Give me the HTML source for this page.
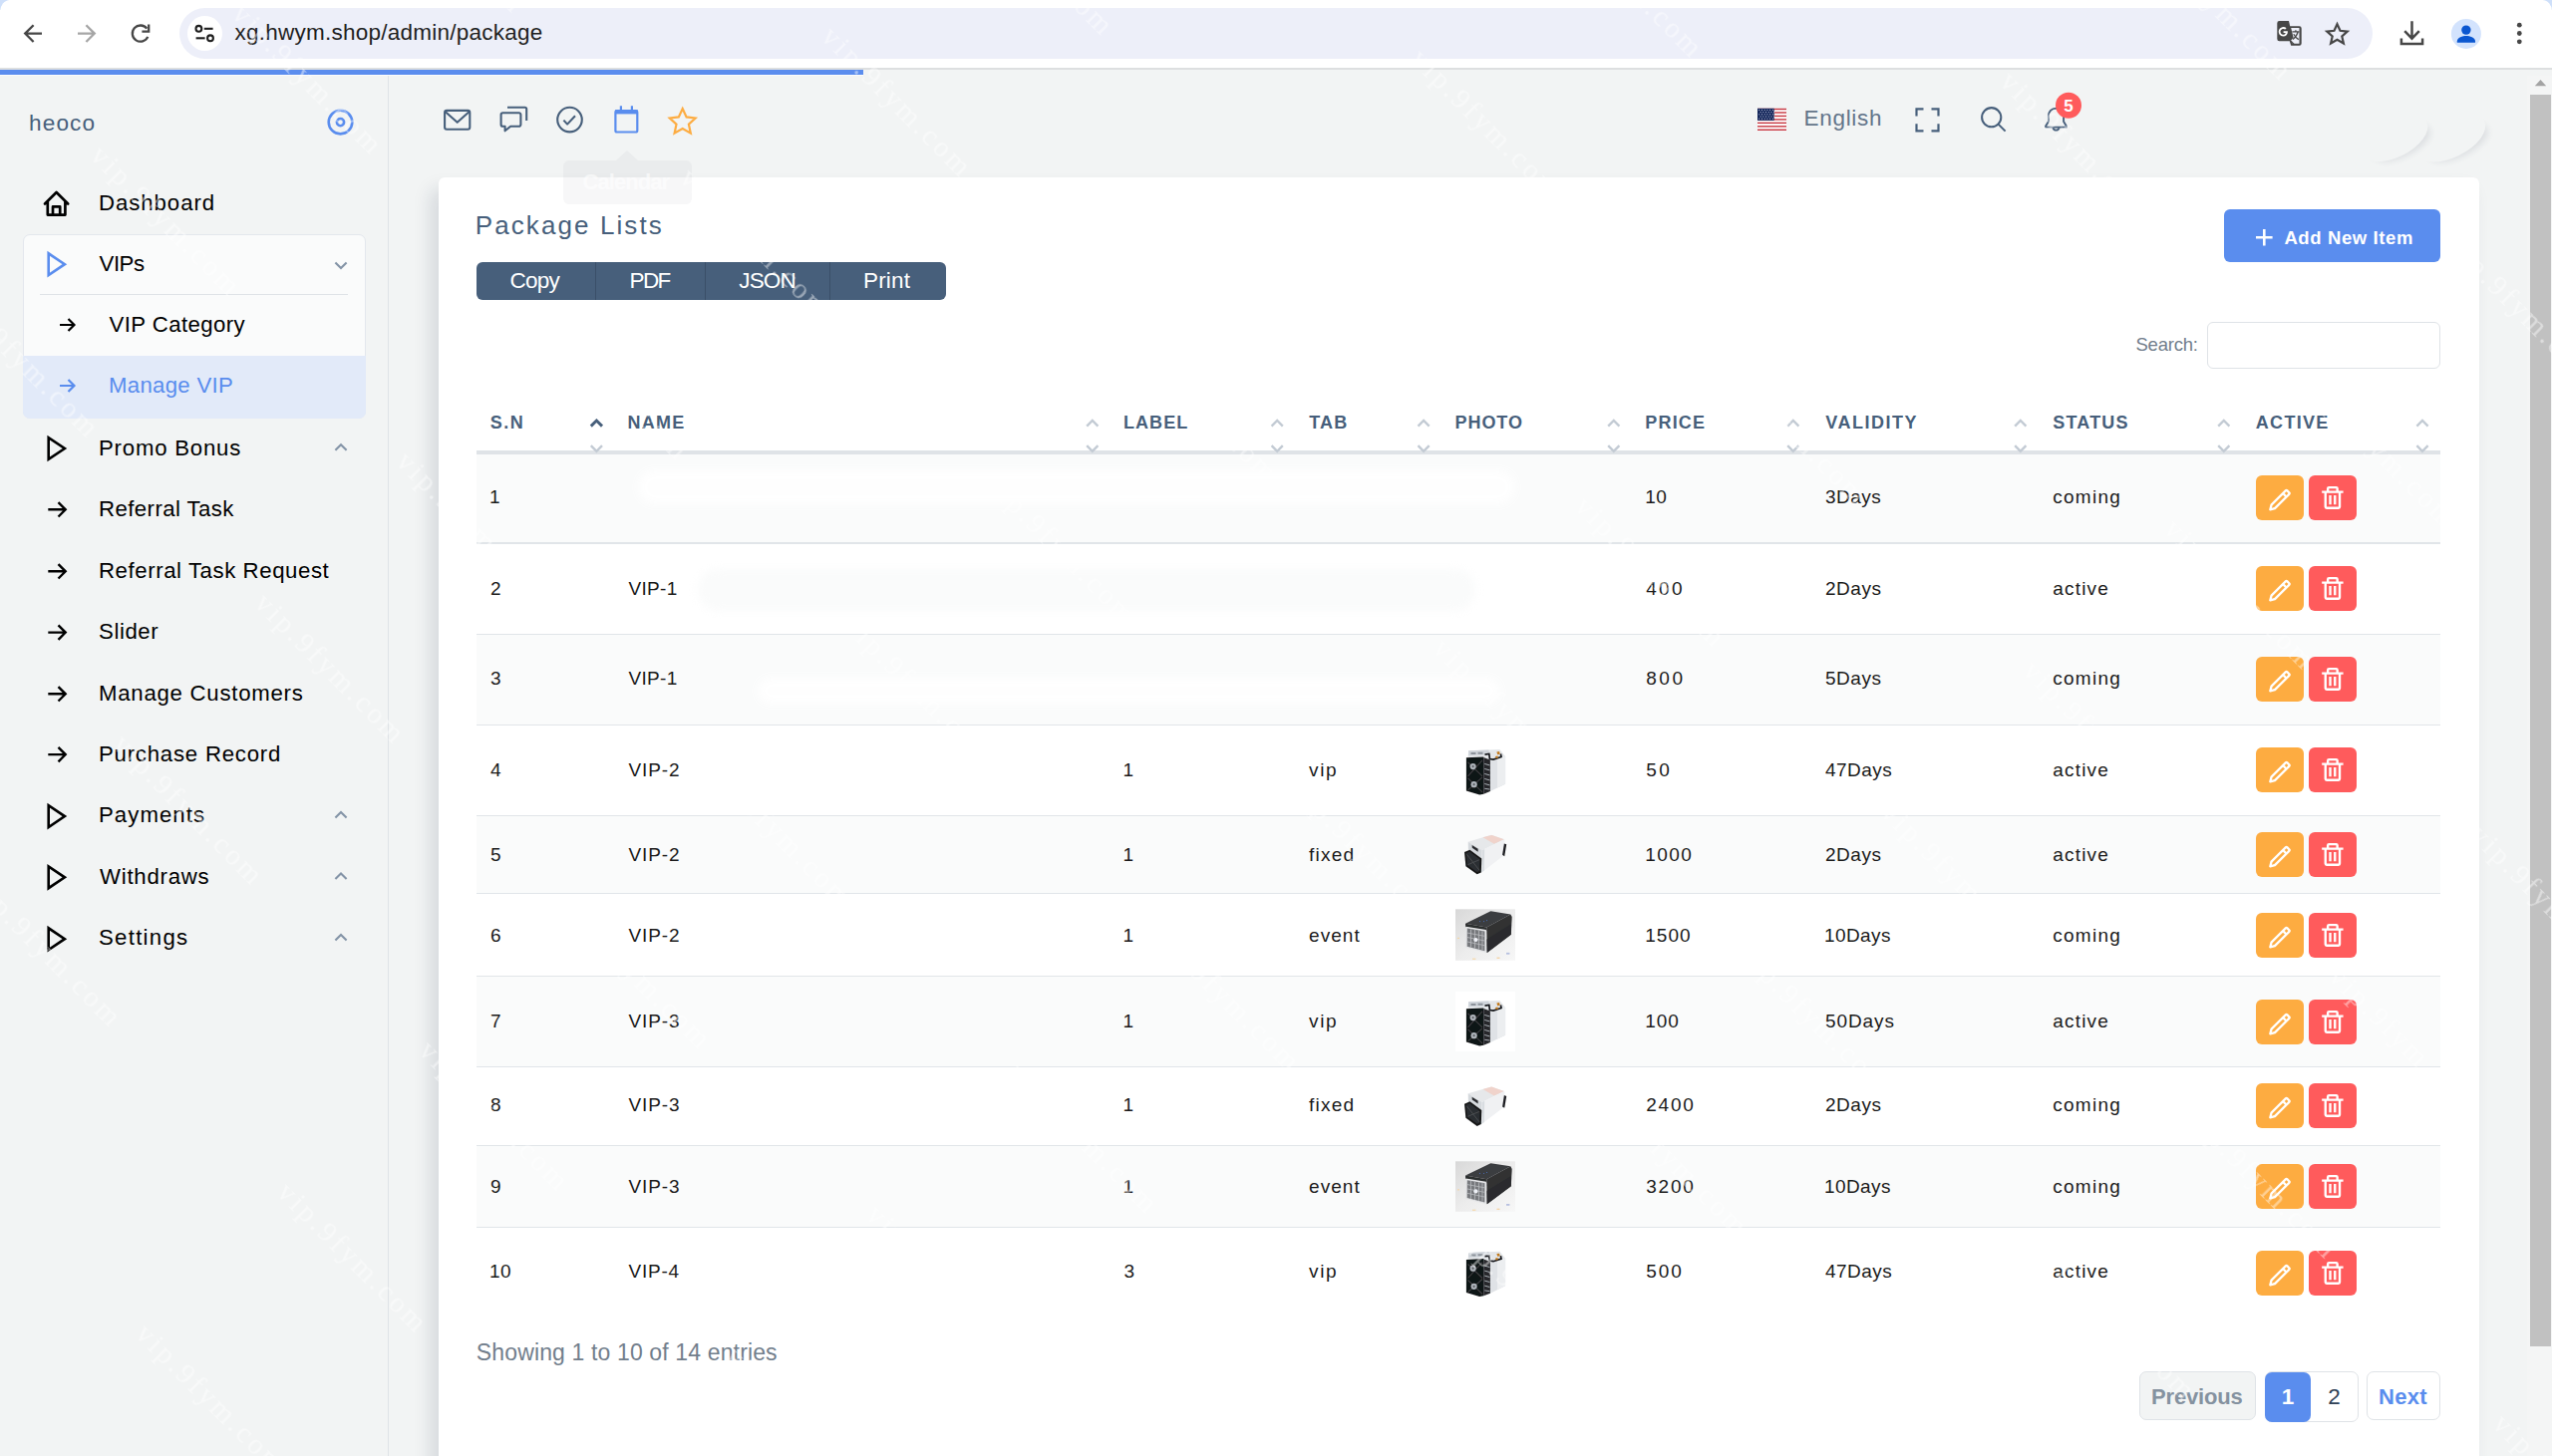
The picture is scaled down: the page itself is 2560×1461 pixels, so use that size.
<!DOCTYPE html>
<html><head><meta charset="utf-8"><title>Package Lists</title><style>html,body{margin:0;padding:0;background:#f2f4f4;}
body{width:2560px;height:1461px;overflow:hidden;position:relative;font-family:"Liberation Sans",sans-serif;}
#root{position:absolute;left:0;top:0;width:2560px;height:1461px;overflow:hidden;}
#root>div,#root>span,#root>svg{position:absolute;display:block;}
#root>span{white-space:nowrap;}
svg{overflow:visible;}</style></head><body><div id="root">
<div style="left:0px;top:0px;width:2560px;height:1461px;background:#f2f4f4;"></div>
<div style="left:0px;top:0px;width:2560px;height:69px;background:#ffffff;"></div>
<div style="left:0px;top:68.3px;width:2560px;height:1.7px;background:#dddfe0;"></div>
<div style="left:0;top:0;width:9px;height:10px;background:#cfe0fa;"></div><div style="left:0;top:0;width:30px;height:30px;border-radius:10px 0 0 0/12px 0 0 0;background:#fff;"></div>
<div style="left:2551px;top:0;width:9px;height:10px;background:#cfe0fa;"></div><div style="left:2530px;top:0;width:30px;height:30px;border-radius:0 10px 0 0/0 11px 0 0;background:#fff;"></div>
<div style="left:180px;top:8px;width:2200px;height:51px;background:#edeff9;border-radius:26px;"></div>
<div style="left:188px;top:16px;width:35px;height:35px;background:#ffffff;border-radius:50%;"></div>
<div style="left:0px;top:70px;width:865.5px;height:4.9px;background:#5b8dee;"></div>
<div style="left:0px;top:74.9px;width:865.5px;height:1px;background:rgba(255,255,255,.7);"></div>
<svg style="left:0px;top:0px;" width="2560" height="68" viewBox="0 0 2560 68">
<g fill="none" stroke="#474747" stroke-width="2.3" stroke-linecap="butt" stroke-linejoin="miter">
<path d="M42 33.6H26.5M33.6 25.2L25.2 33.6L33.6 42"/>
<path d="M78 33.6H93.5M86.4 25.2L94.8 33.6L86.4 42" stroke="#a6a6a6"/>
<path d="M147.3 28.6A8.1 8.1 0 1 0 148.3 36.9" /><path d="M149.2 24.4V31.7H142.4" />
</g>
<g fill="none" stroke="#1f1f1f" stroke-width="2.1">
<circle cx="199.4" cy="28.8" r="2.9"/><path d="M204.8 28.8H213.6"/>
<circle cx="211" cy="38.3" r="2.9"/><path d="M196.6 38.3H205.6"/>
</g>
<!-- translate -->
<path d="M2286.5 21h9.5l1.2 5.2h9.3a2.2 2.2 0 0 1 2.2 2.2v15.2a2.2 2.2 0 0 1-2.2 2.2h-8.3l-1.4-4.6h-10.3a2.2 2.2 0 0 1-2.2-2.2V23.2a2.2 2.2 0 0 1 2.2-2.2z" fill="#474747"/>
<path d="M2298.2 28h8.3v15.8h-7.2l-1.1-3.4 2.4-2.6z" fill="#edeff9"/>
<path d="M2299.4 31.8h7M2302.9 30.3v1.5M2305.2 31.8c-.8 3.2-2.8 5.8-5.2 7.6M2300.8 34.2c1.2 2.2 3 4.2 5 5.4M2298 41.2l3.4 3.6" stroke="#474747" stroke-width="1.3" fill="none"/>
<path d="M2294.6 31.2h-4v1.7h2.2c-.3 1.1-1.2 1.8-2.4 1.8a2.9 2.9 0 1 1 1.9-5.1l1.3-1.3a4.7 4.7 0 1 0-3.2 8.2c2.7 0 4.5-1.9 4.5-4.6 0-.3 0-.5-.1-.7z" fill="#fff"/>
<!-- bookmark star -->
<path d="M2344.5 24.2l3 6.6 7.2.8-5.4 4.8 1.6 7.1-6.4-3.8-6.4 3.8 1.6-7.1-5.4-4.8 7.2-.8z" fill="none" stroke="#474747" stroke-width="2.2" stroke-linejoin="miter"/>
<!-- download -->
<g fill="none" stroke="#474747" stroke-width="2.5">
<path d="M2419.5 21.2V38.4M2412.2 31.2l7.3 7.4 7.3-7.4"/>
<path d="M2408.9 38.6v5.3h21.2v-5.3"/>
</g>
<!-- profile -->
<circle cx="2473.9" cy="33.9" r="15" fill="#d3e3fd"/>
<circle cx="2473.9" cy="30.1" r="4.7" fill="#0b57d0"/>
<path d="M2464.8 42.8v-1.6c0-3.3 5.6-5.2 9.1-5.2s9.1 1.9 9.1 5.2v1.6z" fill="#0b57d0"/>
<!-- menu dots -->
<g fill="#474747"><circle cx="2527.3" cy="25.2" r="2.4"/><circle cx="2527.3" cy="33.5" r="2.4"/><circle cx="2527.3" cy="41.8" r="2.4"/></g>
</svg>
<span style="left:235.50px;top:21.65px;font:400 22.5px/1 'Liberation Sans',sans-serif;letter-spacing:0.244px;color:#1f1f1f;">xg.hwym.shop/admin/package</span>
<div style="left:389px;top:75.5px;width:1px;height:1385.5px;background:#dfe3e7;"></div>
<span style="left:29.00px;top:113.37px;font:400 22.6px/1 'Liberation Sans',sans-serif;letter-spacing:1.127px;color:#475f7b;">heoco</span>
<div style="left:23.2px;top:235.3px;width:343.5px;height:184.7px;background:#fafbfb;border:1px solid #e3e7ed;border-radius:7px;box-sizing:border-box;overflow:hidden;"></div>
<div style="left:23.4px;top:357px;width:343.2px;height:62.8px;background:#e2eaf9;border-radius:0 0 7px 7px;"></div>
<div style="left:40px;top:295px;width:309px;height:1px;background:#dfe3e7;"></div>
<svg style="left:0px;top:76px;" width="389" height="1000" viewBox="0 76 389 1000">
<g fill="none" stroke="#5a8dee" stroke-width="2.6"><circle cx="341.5" cy="122.6" r="11.8"/><circle cx="341.5" cy="122.6" r="3.6"/></g>
<path d="M45 204.5L56.6 193L68.2 204.5M47.8 202.6V215.6H65.4V202.6M53 215.6V207.4H60.2V215.6" fill="none" stroke="#000" stroke-width="2.7" stroke-linejoin="round" stroke-linecap="round"/>
<path d="M48.7 254.29999999999998V276.09999999999997L64.9 265.2Z" fill="none" stroke="#5a8dee" stroke-width="2.6" stroke-linejoin="miter"/>
<path d="M336.4 263.5L342 269.1L347.6 263.5" fill="none" stroke="#8494a7" stroke-width="2.1"/>
<path d="M60.03 326H74.14M68.496 320.024L74.472 326L68.496 331.976" fill="none" stroke="#000" stroke-width="2.20"/>
<path d="M60.03 387H74.14M68.496 381.024L74.472 387L68.496 392.976" fill="none" stroke="#5a8dee" stroke-width="2.20"/>
<path d="M48.7 439.1V460.9L64.9 450Z" fill="none" stroke="#000" stroke-width="2.6" stroke-linejoin="miter"/><path d="M336.4 451.8L342 446.2L347.6 451.8" fill="none" stroke="#8494a7" stroke-width="2.1"/>
<path d="M48.3 511.3H65.3M58.5 504.1L65.7 511.3L58.5 518.5" fill="none" stroke="#000" stroke-width="2.40"/>
<path d="M48.3 573.3H65.3M58.5 566.0999999999999L65.7 573.3L58.5 580.5" fill="none" stroke="#000" stroke-width="2.40"/>
<path d="M48.3 634.6H65.3M58.5 627.4L65.7 634.6L58.5 641.8000000000001" fill="none" stroke="#000" stroke-width="2.40"/>
<path d="M48.3 696.3H65.3M58.5 689.0999999999999L65.7 696.3L58.5 703.5" fill="none" stroke="#000" stroke-width="2.40"/>
<path d="M48.3 757.1H65.3M58.5 749.9L65.7 757.1L58.5 764.3000000000001" fill="none" stroke="#000" stroke-width="2.40"/>
<path d="M48.7 808.2V830.0L64.9 819.1Z" fill="none" stroke="#000" stroke-width="2.6" stroke-linejoin="miter"/><path d="M336.4 820.5L342 814.9L347.6 820.5" fill="none" stroke="#8494a7" stroke-width="2.1"/>
<path d="M48.7 869.4V891.1999999999999L64.9 880.3Z" fill="none" stroke="#000" stroke-width="2.6" stroke-linejoin="miter"/><path d="M336.4 882L342 876.4L347.6 882" fill="none" stroke="#8494a7" stroke-width="2.1"/>
<path d="M48.7 931.3000000000001V953.1L64.9 942.2Z" fill="none" stroke="#000" stroke-width="2.6" stroke-linejoin="miter"/><path d="M336.4 943.5L342 937.9L347.6 943.5" fill="none" stroke="#8494a7" stroke-width="2.1"/>
</svg>
<span style="left:99.00px;top:193.21px;font:400 22.2px/1 'Liberation Sans',sans-serif;letter-spacing:0.943px;color:#000;">Dashboard</span>
<span style="left:99.50px;top:253.71px;font:400 22.2px/1 'Liberation Sans',sans-serif;letter-spacing:-0.421px;color:#000;">VIPs</span>
<span style="left:109.50px;top:314.96px;font:400 22.2px/1 'Liberation Sans',sans-serif;letter-spacing:0.422px;color:#000;">VIP Category</span>
<span style="left:109.00px;top:375.71px;font:400 22.2px/1 'Liberation Sans',sans-serif;letter-spacing:0.299px;color:#5a8dee;">Manage VIP</span>
<span style="left:99.00px;top:438.71px;font:400 22.2px/1 'Liberation Sans',sans-serif;letter-spacing:0.792px;color:#000;">Promo Bonus</span>
<span style="left:99.00px;top:499.96px;font:400 22.2px/1 'Liberation Sans',sans-serif;letter-spacing:0.429px;color:#000;">Referral Task</span>
<span style="left:99.00px;top:561.71px;font:400 22.2px/1 'Liberation Sans',sans-serif;letter-spacing:0.583px;color:#000;">Referral Task Request</span>
<span style="left:99.00px;top:622.96px;font:400 22.2px/1 'Liberation Sans',sans-serif;letter-spacing:0.583px;color:#000;">Slider</span>
<span style="left:99.00px;top:684.96px;font:400 22.2px/1 'Liberation Sans',sans-serif;letter-spacing:0.749px;color:#000;">Manage Customers</span>
<span style="left:99.00px;top:745.71px;font:400 22.2px/1 'Liberation Sans',sans-serif;letter-spacing:0.780px;color:#000;">Purchase Record</span>
<span style="left:99.00px;top:807.46px;font:400 22.2px/1 'Liberation Sans',sans-serif;letter-spacing:1.063px;color:#000;">Payments</span>
<span style="left:100.00px;top:868.71px;font:400 22.2px/1 'Liberation Sans',sans-serif;letter-spacing:0.754px;color:#000;">Withdraws</span>
<span style="left:99.00px;top:930.46px;font:400 22.2px/1 'Liberation Sans',sans-serif;letter-spacing:1.275px;color:#000;">Settings</span>
<div style="left:2535px;top:75.5px;width:25px;height:1385.5px;background:#f4f5f5;"></div>
<div style="left:2538px;top:95px;width:21px;height:1256px;background:#c1c1c1;"></div>
<svg style="left:2538px;top:76px;" width="22" height="16" viewBox="0 0 22 16"><path d="M4.8 10.2L10.5 4L16.2 10.2Z" fill="#a3a3a3"/></svg>
<svg style="left:390px;top:76px;" width="2145" height="100" viewBox="390 76 2145 100">
<g fill="none" stroke="#475f7b" stroke-width="2.1" stroke-linejoin="round">
<rect x="446.1" y="110.9" width="25.2" height="18.8" rx="2"/><path d="M446.6 112L458.7 122.8L470.8 112"/>
<path d="M504.4 113.3h16.2a1.8 1.8 0 0 1 1.8 1.8v9.8a1.8 1.8 0 0 1-1.8 1.8h-8.4l-5.6 4.6v-4.6h-2.2a1.8 1.8 0 0 1-1.8-1.8v-9.8a1.8 1.8 0 0 1 1.8-1.8z"/>
<path d="M509 107.7h17.6a1.6 1.6 0 0 1 1.6 1.6V121"/>
<circle cx="571.5" cy="120.1" r="12.3"/><path d="M565.4 120.6l3.7 4l7.9-8.4"/>
</g>
<g fill="none" stroke="#5a8dee" stroke-width="2.2">
<rect x="617.4" y="111.2" width="21.9" height="21.3" rx="1.6"/>
<path d="M617 112.3h22.8" stroke-width="4.2"/><path d="M622.9 106.3v4.5M633.9 106.3v4.5"/>
</g>
<path d="M684.7 109l3.9 8.4 9 1.1-6.7 6.2 1.9 9-8.1-4.6-8.1 4.6 1.9-9-6.7-6.2 9-1.1z" fill="none" stroke="#fdac41" stroke-width="2.2" stroke-linejoin="miter"/>
<!-- flag -->
<g>
<rect x="1763" y="108.8" width="29" height="22.4" fill="#fff"/>
<rect x="1763" y="108.80" width="29" height="1.45" fill="#c83a44"/><rect x="1763" y="112.26" width="29" height="1.45" fill="#c83a44"/><rect x="1763" y="115.72" width="29" height="1.45" fill="#c83a44"/><rect x="1763" y="119.18" width="29" height="1.45" fill="#c83a44"/><rect x="1763" y="122.64" width="29" height="1.45" fill="#c83a44"/><rect x="1763" y="126.10" width="29" height="1.45" fill="#c83a44"/><rect x="1763" y="129.56" width="29" height="1.45" fill="#c83a44"/>
<rect x="1763" y="108.8" width="16.7" height="12.1" fill="#13255a"/>
<g fill="#c9cfe2"><rect x="1764.30" y="109.9" width="1" height="1"/><rect x="1767.00" y="109.9" width="1" height="1"/><rect x="1769.70" y="109.9" width="1" height="1"/><rect x="1772.40" y="109.9" width="1" height="1"/><rect x="1775.10" y="109.9" width="1" height="1"/><rect x="1777.80" y="109.9" width="1" height="1"/><rect x="1765.65" y="112.1" width="1" height="1"/><rect x="1768.35" y="112.1" width="1" height="1"/><rect x="1771.05" y="112.1" width="1" height="1"/><rect x="1773.75" y="112.1" width="1" height="1"/><rect x="1776.45" y="112.1" width="1" height="1"/><rect x="1779.15" y="112.1" width="1" height="1"/><rect x="1764.30" y="114.3" width="1" height="1"/><rect x="1767.00" y="114.3" width="1" height="1"/><rect x="1769.70" y="114.3" width="1" height="1"/><rect x="1772.40" y="114.3" width="1" height="1"/><rect x="1775.10" y="114.3" width="1" height="1"/><rect x="1777.80" y="114.3" width="1" height="1"/><rect x="1765.65" y="116.5" width="1" height="1"/><rect x="1768.35" y="116.5" width="1" height="1"/><rect x="1771.05" y="116.5" width="1" height="1"/><rect x="1773.75" y="116.5" width="1" height="1"/><rect x="1776.45" y="116.5" width="1" height="1"/><rect x="1779.15" y="116.5" width="1" height="1"/><rect x="1764.30" y="118.7" width="1" height="1"/><rect x="1767.00" y="118.7" width="1" height="1"/><rect x="1769.70" y="118.7" width="1" height="1"/><rect x="1772.40" y="118.7" width="1" height="1"/><rect x="1775.10" y="118.7" width="1" height="1"/><rect x="1777.80" y="118.7" width="1" height="1"/></g>
</g>
<g fill="none" stroke="#475f7b" stroke-width="2.2">
<path d="M1922.5 116.4v-7.1h7M1937.5 109.3h7v7.1M1944.5 124.2v7.1h-7M1929.5 131.3h-7v-7.1"/>
</g>
<g fill="none" stroke="#475f7b" stroke-width="2.05"><circle cx="1997.7" cy="117.7" r="9.6"/><path d="M2004.6 124.6l7 7"/></g>
<g fill="none" stroke="#475f7b" stroke-width="1.9" stroke-linejoin="round">
<path d="M2062.5 108.6c-4.6 0-7.6 3.4-7.6 7.8v5.6l-2.8 4.6v1h20.8v-1l-2.8-4.6v-5.6c0-4.4-3-7.8-7.6-7.8z"/>
<path d="M2059.4 128.2a3.2 3.2 0 0 0 6.2 0"/>
</g>
<circle cx="2075" cy="105.8" r="13" fill="#ff5b5c"/>
</svg>
<span style="left:1809.50px;top:107.95px;font:400 22.5px/1 'Liberation Sans',sans-serif;letter-spacing:0.703px;color:#64758a;">English</span>
<span style="left:1975.00px;top:97.81px;font:700 17px/1 'Liberation Sans',sans-serif;letter-spacing:0.000px;color:#fff;width:200px;text-align:center;">5</span>
<div style="left:2364px;top:118px;width:74px;height:40px;border-radius:50%;box-shadow:5px 8px 7px -6px rgba(40,50,70,0.11);transform:rotate(-26deg);"></div>
<div style="left:2420px;top:118px;width:76px;height:40px;border-radius:50%;box-shadow:5px 8px 7px -6px rgba(40,50,70,0.11);transform:rotate(-26deg);"></div>
<div style="left:440px;top:178px;width:2047px;height:1303px;background:#ffffff;border-radius:6px;box-shadow:-8px 12px 18px 0 rgba(25,42,70,0.13);"></div>
<div style="left:564.5px;top:161px;width:129px;height:43.5px;background:rgba(20,30,45,0.035);border-radius:6px;"></div>
<svg style="left:618px;top:151px;" width="22" height="10" viewBox="0 0 22 10"><path d="M0 10L11 0L22 10Z" fill="rgba(20,30,45,0.035)"/></svg>
<span style="left:584.50px;top:172.38px;font:700 22px/1 'Liberation Sans',sans-serif;letter-spacing:-0.940px;color:rgba(255,255,255,0.6);">Calendar</span>
<span style="left:476.75px;top:212.99px;font:400 26px/1 'Liberation Sans',sans-serif;letter-spacing:2.095px;color:#475f7b;">Package Lists</span>
<div style="left:478px;top:263px;width:471px;height:38px;background:#475f7b;border-radius:6px;"></div>
<div style="left:597px;top:263px;width:1.2px;height:38px;background:#3a4f68;"></div>
<div style="left:707px;top:263px;width:1.2px;height:38px;background:#3a4f68;"></div>
<div style="left:832px;top:263px;width:1.2px;height:38px;background:#3a4f68;"></div>
<span style="left:511.50px;top:271.25px;font:400 22.5px/1 'Liberation Sans',sans-serif;letter-spacing:-0.759px;color:#fff;">Copy</span>
<span style="left:631.50px;top:271.25px;font:400 22.5px/1 'Liberation Sans',sans-serif;letter-spacing:-1.628px;color:#fff;">PDF</span>
<span style="left:741.25px;top:271.25px;font:400 22.5px/1 'Liberation Sans',sans-serif;letter-spacing:-0.836px;color:#fff;">JSON</span>
<span style="left:866.00px;top:271.25px;font:400 22.5px/1 'Liberation Sans',sans-serif;letter-spacing:0.184px;color:#fff;">Print</span>
<div style="left:2231px;top:210px;width:217px;height:53px;background:#5a8dee;border-radius:6px;"></div>
<svg style="left:2262px;top:229px;" width="19" height="19" viewBox="0 0 19 19"><path d="M9.3 1v16.6M1 9.3h16.6" stroke="#fff" stroke-width="2.6" fill="none"/></svg>
<span style="left:2291.40px;top:229.84px;font:700 18.5px/1 'Liberation Sans',sans-serif;letter-spacing:0.612px;color:#fff;">Add New Item</span>
<span style="left:2142.50px;top:336.84px;font:400 18.5px/1 'Liberation Sans',sans-serif;letter-spacing:-0.228px;color:#727e8c;">Search:</span>
<div style="left:2214px;top:323px;width:234px;height:46.5px;background:#fff;border:1.3px solid #dfe3e7;border-radius:6px;box-sizing:border-box;"></div>
<div style="left:478px;top:455.5px;width:1970px;height:89.5px;background:#fafbfb;"></div>
<div style="left:478px;top:636.25px;width:1970px;height:91.25px;background:#fafbfb;"></div>
<div style="left:478px;top:818.25px;width:1970px;height:78.0px;background:#fafbfb;"></div>
<div style="left:478px;top:979.25px;width:1970px;height:91.25px;background:#fafbfb;"></div>
<div style="left:478px;top:1149.25px;width:1970px;height:82.0px;background:#fafbfb;"></div>
<div style="left:478px;top:452px;width:1970px;height:3.5px;background:#dfe3e7;"></div>
<div style="left:478px;top:544.3px;width:1970px;height:1.4px;background:#e1e5e9;"></div>
<div style="left:478px;top:635.55px;width:1970px;height:1.4px;background:#e1e5e9;"></div>
<div style="left:478px;top:726.8px;width:1970px;height:1.4px;background:#e1e5e9;"></div>
<div style="left:478px;top:817.55px;width:1970px;height:1.4px;background:#e1e5e9;"></div>
<div style="left:478px;top:895.55px;width:1970px;height:1.4px;background:#e1e5e9;"></div>
<div style="left:478px;top:978.55px;width:1970px;height:1.4px;background:#e1e5e9;"></div>
<div style="left:478px;top:1069.8px;width:1970px;height:1.4px;background:#e1e5e9;"></div>
<div style="left:478px;top:1148.55px;width:1970px;height:1.4px;background:#e1e5e9;"></div>
<div style="left:478px;top:1230.55px;width:1970px;height:1.4px;background:#e1e5e9;"></div>
<span style="left:491.75px;top:414.76px;font:700 18px/1 'Liberation Sans',sans-serif;letter-spacing:1.497px;color:#475f7b;">S.N</span>
<span style="left:629.50px;top:414.76px;font:700 18px/1 'Liberation Sans',sans-serif;letter-spacing:1.253px;color:#475f7b;">NAME</span>
<span style="left:1127.00px;top:414.76px;font:700 18px/1 'Liberation Sans',sans-serif;letter-spacing:1.063px;color:#475f7b;">LABEL</span>
<span style="left:1313.25px;top:414.76px;font:700 18px/1 'Liberation Sans',sans-serif;letter-spacing:1.171px;color:#475f7b;">TAB</span>
<span style="left:1459.50px;top:414.76px;font:700 18px/1 'Liberation Sans',sans-serif;letter-spacing:0.956px;color:#475f7b;">PHOTO</span>
<span style="left:1650.25px;top:414.76px;font:700 18px/1 'Liberation Sans',sans-serif;letter-spacing:1.186px;color:#475f7b;">PRICE</span>
<span style="left:1831.25px;top:414.76px;font:700 18px/1 'Liberation Sans',sans-serif;letter-spacing:1.513px;color:#475f7b;">VALIDITY</span>
<span style="left:2059.25px;top:414.76px;font:700 18px/1 'Liberation Sans',sans-serif;letter-spacing:1.186px;color:#475f7b;">STATUS</span>
<span style="left:2262.80px;top:414.76px;font:700 18px/1 'Liberation Sans',sans-serif;letter-spacing:1.300px;color:#475f7b;">ACTIVE</span>
<svg style="left:478px;top:415px;" width="1970" height="42" viewBox="478 415 1970 42"><path d="M592.8 427.6L598.4 422L604.0 427.6" fill="none" stroke="#475f7b" stroke-width="2.9"/><path d="M592.8 447.2L598.4 452.8L604.0 447.2" fill="none" stroke="#c3cbd4" stroke-width="2.4"/><path d="M1090.2 427.6L1095.8 422L1101.3999999999999 427.6" fill="none" stroke="#c3cbd4" stroke-width="2.4"/><path d="M1090.2 447.2L1095.8 452.8L1101.3999999999999 447.2" fill="none" stroke="#c3cbd4" stroke-width="2.4"/><path d="M1275.6000000000001 427.6L1281.2 422L1286.8 427.6" fill="none" stroke="#c3cbd4" stroke-width="2.4"/><path d="M1275.6000000000001 447.2L1281.2 452.8L1286.8 447.2" fill="none" stroke="#c3cbd4" stroke-width="2.4"/><path d="M1422.5 427.6L1428.1 422L1433.6999999999998 427.6" fill="none" stroke="#c3cbd4" stroke-width="2.4"/><path d="M1422.5 447.2L1428.1 452.8L1433.6999999999998 447.2" fill="none" stroke="#c3cbd4" stroke-width="2.4"/><path d="M1613.2 427.6L1618.8 422L1624.3999999999999 427.6" fill="none" stroke="#c3cbd4" stroke-width="2.4"/><path d="M1613.2 447.2L1618.8 452.8L1624.3999999999999 447.2" fill="none" stroke="#c3cbd4" stroke-width="2.4"/><path d="M1793.2 427.6L1798.8 422L1804.3999999999999 427.6" fill="none" stroke="#c3cbd4" stroke-width="2.4"/><path d="M1793.2 447.2L1798.8 452.8L1804.3999999999999 447.2" fill="none" stroke="#c3cbd4" stroke-width="2.4"/><path d="M2021.2 427.6L2026.8 422L2032.3999999999999 427.6" fill="none" stroke="#c3cbd4" stroke-width="2.4"/><path d="M2021.2 447.2L2026.8 452.8L2032.3999999999999 447.2" fill="none" stroke="#c3cbd4" stroke-width="2.4"/><path d="M2225.2000000000003 427.6L2230.8 422L2236.4 427.6" fill="none" stroke="#c3cbd4" stroke-width="2.4"/><path d="M2225.2000000000003 447.2L2230.8 452.8L2236.4 447.2" fill="none" stroke="#c3cbd4" stroke-width="2.4"/><path d="M2424.4 427.6L2430 422L2435.6 427.6" fill="none" stroke="#c3cbd4" stroke-width="2.4"/><path d="M2424.4 447.2L2430 452.8L2435.6 447.2" fill="none" stroke="#c3cbd4" stroke-width="2.4"/></svg>
<div style="left:640px;top:472px;width:880px;height:34px;background:#fff;border-radius:18px;filter:blur(5px);opacity:.95"></div>
<div style="left:700px;top:571px;width:780px;height:42px;background:#fafbfb;border-radius:20px;filter:blur(4px);"></div>
<div style="left:760px;top:680px;width:745px;height:26px;background:#fff;border-radius:14px;filter:blur(5px);opacity:.95"></div>
<span style="left:491.00px;top:489.42px;font:400 19px/1 'Liberation Sans',sans-serif;letter-spacing:0.000px;color:#1a1a1a;">1</span>
<span style="left:1650.25px;top:489.42px;font:400 19px/1 'Liberation Sans',sans-serif;letter-spacing:0.433px;color:#1a1a1a;">10</span>
<span style="left:1831.00px;top:489.42px;font:400 19px/1 'Liberation Sans',sans-serif;letter-spacing:0.474px;color:#1a1a1a;">3Days</span>
<span style="left:2059.25px;top:489.42px;font:400 19px/1 'Liberation Sans',sans-serif;letter-spacing:1.264px;color:#1a1a1a;">coming</span>
<div style="left:2263px;top:477px;width:48px;height:45px;background:#fdac41;border-radius:6px;"></div>
<div style="left:2316px;top:477px;width:48px;height:45px;background:#ff5b5c;border-radius:6px;"></div>
<span style="left:492.00px;top:580.67px;font:400 19px/1 'Liberation Sans',sans-serif;letter-spacing:0.000px;color:#1a1a1a;">2</span>
<span style="left:630.50px;top:580.67px;font:400 19px/1 'Liberation Sans',sans-serif;letter-spacing:0.325px;color:#1a1a1a;">VIP-1</span>
<span style="left:1651.25px;top:580.67px;font:400 19px/1 'Liberation Sans',sans-serif;letter-spacing:2.308px;color:#1a1a1a;">400</span>
<span style="left:1831.00px;top:580.67px;font:400 19px/1 'Liberation Sans',sans-serif;letter-spacing:0.536px;color:#1a1a1a;">2Days</span>
<span style="left:2059.25px;top:580.67px;font:400 19px/1 'Liberation Sans',sans-serif;letter-spacing:1.187px;color:#1a1a1a;">active</span>
<div style="left:2263px;top:568px;width:48px;height:45px;background:#fdac41;border-radius:6px;"></div>
<div style="left:2316px;top:568px;width:48px;height:45px;background:#ff5b5c;border-radius:6px;"></div>
<span style="left:492.00px;top:671.42px;font:400 19px/1 'Liberation Sans',sans-serif;letter-spacing:0.000px;color:#1a1a1a;">3</span>
<span style="left:630.50px;top:671.42px;font:400 19px/1 'Liberation Sans',sans-serif;letter-spacing:0.325px;color:#1a1a1a;">VIP-1</span>
<span style="left:1651.25px;top:671.42px;font:400 19px/1 'Liberation Sans',sans-serif;letter-spacing:2.558px;color:#1a1a1a;">800</span>
<span style="left:1831.00px;top:671.42px;font:400 19px/1 'Liberation Sans',sans-serif;letter-spacing:0.536px;color:#1a1a1a;">5Days</span>
<span style="left:2059.25px;top:671.42px;font:400 19px/1 'Liberation Sans',sans-serif;letter-spacing:1.264px;color:#1a1a1a;">coming</span>
<div style="left:2263px;top:659px;width:48px;height:45px;background:#fdac41;border-radius:6px;"></div>
<div style="left:2316px;top:659px;width:48px;height:45px;background:#ff5b5c;border-radius:6px;"></div>
<span style="left:492.00px;top:762.67px;font:400 19px/1 'Liberation Sans',sans-serif;letter-spacing:0.000px;color:#1a1a1a;">4</span>
<span style="left:630.50px;top:762.67px;font:400 19px/1 'Liberation Sans',sans-serif;letter-spacing:0.887px;color:#1a1a1a;">VIP-2</span>
<span style="left:1126.50px;top:762.67px;font:400 19px/1 'Liberation Sans',sans-serif;letter-spacing:0.000px;color:#1a1a1a;">1</span>
<span style="left:1313.00px;top:762.67px;font:400 19px/1 'Liberation Sans',sans-serif;letter-spacing:1.639px;color:#1a1a1a;">vip</span>
<span style="left:1651.25px;top:762.67px;font:400 19px/1 'Liberation Sans',sans-serif;letter-spacing:2.433px;color:#1a1a1a;">50</span>
<span style="left:1831.00px;top:762.67px;font:400 19px/1 'Liberation Sans',sans-serif;letter-spacing:0.466px;color:#1a1a1a;">47Days</span>
<span style="left:2059.25px;top:762.67px;font:400 19px/1 'Liberation Sans',sans-serif;letter-spacing:1.187px;color:#1a1a1a;">active</span>
<div style="left:2263px;top:750px;width:48px;height:45px;background:#fdac41;border-radius:6px;"></div>
<div style="left:2316px;top:750px;width:48px;height:45px;background:#ff5b5c;border-radius:6px;"></div>
<span style="left:492.00px;top:847.67px;font:400 19px/1 'Liberation Sans',sans-serif;letter-spacing:0.000px;color:#1a1a1a;">5</span>
<span style="left:630.50px;top:847.67px;font:400 19px/1 'Liberation Sans',sans-serif;letter-spacing:0.887px;color:#1a1a1a;">VIP-2</span>
<span style="left:1126.50px;top:847.67px;font:400 19px/1 'Liberation Sans',sans-serif;letter-spacing:0.000px;color:#1a1a1a;">1</span>
<span style="left:1313.00px;top:847.67px;font:400 19px/1 'Liberation Sans',sans-serif;letter-spacing:1.233px;color:#1a1a1a;">fixed</span>
<span style="left:1650.25px;top:847.67px;font:400 19px/1 'Liberation Sans',sans-serif;letter-spacing:1.433px;color:#1a1a1a;">1000</span>
<span style="left:1831.00px;top:847.67px;font:400 19px/1 'Liberation Sans',sans-serif;letter-spacing:0.536px;color:#1a1a1a;">2Days</span>
<span style="left:2059.25px;top:847.67px;font:400 19px/1 'Liberation Sans',sans-serif;letter-spacing:1.187px;color:#1a1a1a;">active</span>
<div style="left:2263px;top:835px;width:48px;height:45px;background:#fdac41;border-radius:6px;"></div>
<div style="left:2316px;top:835px;width:48px;height:45px;background:#ff5b5c;border-radius:6px;"></div>
<span style="left:492.00px;top:928.92px;font:400 19px/1 'Liberation Sans',sans-serif;letter-spacing:0.000px;color:#1a1a1a;">6</span>
<span style="left:630.50px;top:928.92px;font:400 19px/1 'Liberation Sans',sans-serif;letter-spacing:0.887px;color:#1a1a1a;">VIP-2</span>
<span style="left:1126.50px;top:928.92px;font:400 19px/1 'Liberation Sans',sans-serif;letter-spacing:0.000px;color:#1a1a1a;">1</span>
<span style="left:1313.00px;top:928.92px;font:400 19px/1 'Liberation Sans',sans-serif;letter-spacing:1.075px;color:#1a1a1a;">event</span>
<span style="left:1650.25px;top:928.92px;font:400 19px/1 'Liberation Sans',sans-serif;letter-spacing:1.016px;color:#1a1a1a;">1500</span>
<span style="left:1830.00px;top:928.92px;font:400 19px/1 'Liberation Sans',sans-serif;letter-spacing:0.416px;color:#1a1a1a;">10Days</span>
<span style="left:2059.25px;top:928.92px;font:400 19px/1 'Liberation Sans',sans-serif;letter-spacing:1.264px;color:#1a1a1a;">coming</span>
<div style="left:2263px;top:916px;width:48px;height:45px;background:#fdac41;border-radius:6px;"></div>
<div style="left:2316px;top:916px;width:48px;height:45px;background:#ff5b5c;border-radius:6px;"></div>
<span style="left:492.00px;top:1014.67px;font:400 19px/1 'Liberation Sans',sans-serif;letter-spacing:0.000px;color:#1a1a1a;">7</span>
<span style="left:630.50px;top:1014.67px;font:400 19px/1 'Liberation Sans',sans-serif;letter-spacing:0.887px;color:#1a1a1a;">VIP-3</span>
<span style="left:1126.50px;top:1014.67px;font:400 19px/1 'Liberation Sans',sans-serif;letter-spacing:0.000px;color:#1a1a1a;">1</span>
<span style="left:1313.00px;top:1014.67px;font:400 19px/1 'Liberation Sans',sans-serif;letter-spacing:1.639px;color:#1a1a1a;">vip</span>
<span style="left:1650.25px;top:1014.67px;font:400 19px/1 'Liberation Sans',sans-serif;letter-spacing:0.933px;color:#1a1a1a;">100</span>
<span style="left:1831.00px;top:1014.67px;font:400 19px/1 'Liberation Sans',sans-serif;letter-spacing:0.916px;color:#1a1a1a;">50Days</span>
<span style="left:2059.25px;top:1014.67px;font:400 19px/1 'Liberation Sans',sans-serif;letter-spacing:1.187px;color:#1a1a1a;">active</span>
<div style="left:2263px;top:1003px;width:48px;height:45px;background:#fdac41;border-radius:6px;"></div>
<div style="left:2316px;top:1003px;width:48px;height:45px;background:#ff5b5c;border-radius:6px;"></div>
<span style="left:492.00px;top:1099.42px;font:400 19px/1 'Liberation Sans',sans-serif;letter-spacing:0.000px;color:#1a1a1a;">8</span>
<span style="left:630.50px;top:1099.42px;font:400 19px/1 'Liberation Sans',sans-serif;letter-spacing:0.887px;color:#1a1a1a;">VIP-3</span>
<span style="left:1126.50px;top:1099.42px;font:400 19px/1 'Liberation Sans',sans-serif;letter-spacing:0.000px;color:#1a1a1a;">1</span>
<span style="left:1313.00px;top:1099.42px;font:400 19px/1 'Liberation Sans',sans-serif;letter-spacing:1.233px;color:#1a1a1a;">fixed</span>
<span style="left:1651.25px;top:1099.42px;font:400 19px/1 'Liberation Sans',sans-serif;letter-spacing:1.766px;color:#1a1a1a;">2400</span>
<span style="left:1831.00px;top:1099.42px;font:400 19px/1 'Liberation Sans',sans-serif;letter-spacing:0.536px;color:#1a1a1a;">2Days</span>
<span style="left:2059.25px;top:1099.42px;font:400 19px/1 'Liberation Sans',sans-serif;letter-spacing:1.264px;color:#1a1a1a;">coming</span>
<div style="left:2263px;top:1087px;width:48px;height:45px;background:#fdac41;border-radius:6px;"></div>
<div style="left:2316px;top:1087px;width:48px;height:45px;background:#ff5b5c;border-radius:6px;"></div>
<span style="left:492.00px;top:1180.67px;font:400 19px/1 'Liberation Sans',sans-serif;letter-spacing:0.000px;color:#1a1a1a;">9</span>
<span style="left:630.50px;top:1180.67px;font:400 19px/1 'Liberation Sans',sans-serif;letter-spacing:0.887px;color:#1a1a1a;">VIP-3</span>
<span style="left:1126.50px;top:1180.67px;font:400 19px/1 'Liberation Sans',sans-serif;letter-spacing:0.000px;color:#1a1a1a;">1</span>
<span style="left:1313.00px;top:1180.67px;font:400 19px/1 'Liberation Sans',sans-serif;letter-spacing:1.075px;color:#1a1a1a;">event</span>
<span style="left:1651.25px;top:1180.67px;font:400 19px/1 'Liberation Sans',sans-serif;letter-spacing:1.766px;color:#1a1a1a;">3200</span>
<span style="left:1830.00px;top:1180.67px;font:400 19px/1 'Liberation Sans',sans-serif;letter-spacing:0.416px;color:#1a1a1a;">10Days</span>
<span style="left:2059.25px;top:1180.67px;font:400 19px/1 'Liberation Sans',sans-serif;letter-spacing:1.264px;color:#1a1a1a;">coming</span>
<div style="left:2263px;top:1168px;width:48px;height:45px;background:#fdac41;border-radius:6px;"></div>
<div style="left:2316px;top:1168px;width:48px;height:45px;background:#ff5b5c;border-radius:6px;"></div>
<span style="left:491.00px;top:1266.42px;font:400 19px/1 'Liberation Sans',sans-serif;letter-spacing:0.433px;color:#1a1a1a;">10</span>
<span style="left:630.50px;top:1266.42px;font:400 19px/1 'Liberation Sans',sans-serif;letter-spacing:0.762px;color:#1a1a1a;">VIP-4</span>
<span style="left:1127.50px;top:1266.42px;font:400 19px/1 'Liberation Sans',sans-serif;letter-spacing:0.000px;color:#1a1a1a;">3</span>
<span style="left:1313.00px;top:1266.42px;font:400 19px/1 'Liberation Sans',sans-serif;letter-spacing:1.639px;color:#1a1a1a;">vip</span>
<span style="left:1651.25px;top:1266.42px;font:400 19px/1 'Liberation Sans',sans-serif;letter-spacing:1.933px;color:#1a1a1a;">500</span>
<span style="left:1831.00px;top:1266.42px;font:400 19px/1 'Liberation Sans',sans-serif;letter-spacing:0.466px;color:#1a1a1a;">47Days</span>
<span style="left:2059.25px;top:1266.42px;font:400 19px/1 'Liberation Sans',sans-serif;letter-spacing:1.187px;color:#1a1a1a;">active</span>
<div style="left:2263px;top:1255px;width:48px;height:45px;background:#fdac41;border-radius:6px;"></div>
<div style="left:2316px;top:1255px;width:48px;height:45px;background:#ff5b5c;border-radius:6px;"></div>
<svg style="left:1440px;top:455px;z-index:3;" width="960" height="880" viewBox="1440 455 960 880"><defs><linearGradient id="gC" x1="0" y1="0" x2="1" y2="1"><stop offset="0" stop-color="#d8d8d8"/><stop offset=".5" stop-color="#ececec"/><stop offset="1" stop-color="#f7f7f7"/></linearGradient><filter id="soft" x="-5%" y="-5%" width="110%" height="110%"><feGaussianBlur stdDeviation="0.45"/></filter></defs><g transform="translate(2272.7,488.1) scale(1.161)" fill="#fff"><path d="M4 21a1 1 0 0 0 .24 0l4-1a1 1 0 0 0 .47-.26L21 7.41a2 2 0 0 0 0-2.82L19.42 3a2 2 0 0 0-2.83 0L4.3 15.29a1.06 1.06 0 0 0-.27.47l-1 4A1 1 0 0 0 3.76 21 1 1 0 0 0 4 21zM18 4.41 19.59 6 18 7.59 16.42 6zM5.91 16.51 15 7.41 16.59 9l-9.1 9.1-2.11.52z"/></g><g transform="translate(2325.6,485.6) scale(1.19,1.15)" fill="#fff"><path d="M5 20a2 2 0 0 0 2 2h10a2 2 0 0 0 2-2V8h2V6h-4V4a2 2 0 0 0-2-2H9a2 2 0 0 0-2 2v2H3v2h2zM9 4h6v2H9zM8 8h9v12H7V8z"/><path d="M9 10h2v8H9zm4 0h2v8h-2z"/></g><g transform="translate(2272.7,579.1) scale(1.161)" fill="#fff"><path d="M4 21a1 1 0 0 0 .24 0l4-1a1 1 0 0 0 .47-.26L21 7.41a2 2 0 0 0 0-2.82L19.42 3a2 2 0 0 0-2.83 0L4.3 15.29a1.06 1.06 0 0 0-.27.47l-1 4A1 1 0 0 0 3.76 21 1 1 0 0 0 4 21zM18 4.41 19.59 6 18 7.59 16.42 6zM5.91 16.51 15 7.41 16.59 9l-9.1 9.1-2.11.52z"/></g><g transform="translate(2325.6,576.6) scale(1.19,1.15)" fill="#fff"><path d="M5 20a2 2 0 0 0 2 2h10a2 2 0 0 0 2-2V8h2V6h-4V4a2 2 0 0 0-2-2H9a2 2 0 0 0-2 2v2H3v2h2zM9 4h6v2H9zM8 8h9v12H7V8z"/><path d="M9 10h2v8H9zm4 0h2v8h-2z"/></g><g transform="translate(2272.7,670.1) scale(1.161)" fill="#fff"><path d="M4 21a1 1 0 0 0 .24 0l4-1a1 1 0 0 0 .47-.26L21 7.41a2 2 0 0 0 0-2.82L19.42 3a2 2 0 0 0-2.83 0L4.3 15.29a1.06 1.06 0 0 0-.27.47l-1 4A1 1 0 0 0 3.76 21 1 1 0 0 0 4 21zM18 4.41 19.59 6 18 7.59 16.42 6zM5.91 16.51 15 7.41 16.59 9l-9.1 9.1-2.11.52z"/></g><g transform="translate(2325.6,667.6) scale(1.19,1.15)" fill="#fff"><path d="M5 20a2 2 0 0 0 2 2h10a2 2 0 0 0 2-2V8h2V6h-4V4a2 2 0 0 0-2-2H9a2 2 0 0 0-2 2v2H3v2h2zM9 4h6v2H9zM8 8h9v12H7V8z"/><path d="M9 10h2v8H9zm4 0h2v8h-2z"/></g><g transform="translate(1460,742.875)" filter="url(#soft)">
<path d="M13.1 10.4L44.4 9.2L50.1 16.2L34.9 19.8L28.3 16.6L12.6 17.2Z" fill="#e3e6e9"/>
<path d="M13.1 10.4L33.5 9.6L33.8 14.4L13 15.2Z" fill="#cfd4da"/>
<path d="M15.5 12h5v2h-5zM22.5 11.8h5v2h-5z" fill="#8d939b"/>
<path d="M34.9 19.6L50.1 16.2L50.1 43.8L34.9 51.2Z" fill="#dfe2e6"/>
<path d="M42 17.9L50.1 16.2L50.1 43.8L42 47.7Z" fill="#eceef0"/>
<path d="M28.3 17L34.9 19.6L34.9 51.2L28.3 53.8Z" fill="#25272a"/>
<g stroke="#aab0b7" stroke-width="1"><path d="M29.3 23.6L34.4 25M29.3 28.6L34.4 30M29.3 33.6L34.4 35M29.3 38.6L34.4 40M29.3 43.6L34.4 45M29.3 48.4L34.4 49.2"/></g>
<path d="M10.9 17.4L28.3 16.5L28.3 53.8L24.2 54.6L10.9 50.6Z" fill="#111213"/>
<g stroke="#3d4043" stroke-width="1.1" fill="none"><path d="M12.5 22L27 36M27 20L12.5 36M12.5 38L27 52M27 37L12.5 50"/></g>
<circle cx="17.6" cy="26.2" r="3.1" fill="#aeb4bb"/><circle cx="18.6" cy="44.3" r="3.1" fill="#aeb4bb"/>
<circle cx="17.6" cy="26.2" r="1.1" fill="#5b5e62"/><circle cx="18.6" cy="44.3" r="1.1" fill="#5b5e62"/>
<path d="M29.5 14.2L33.8 13.6L34.4 18.6L38 19.2L46 16.6L45.4 13.6" fill="none" stroke="#15171a" stroke-width="1.7"/>
<path d="M41.4 11.6l2.6 -.4 .8 2.6 -2.6 .5zM40 16l2.4 -.4 .6 2 -2.4 .5z" fill="#c27a1f"/>
</g><g transform="translate(2272.7,761.1) scale(1.161)" fill="#fff"><path d="M4 21a1 1 0 0 0 .24 0l4-1a1 1 0 0 0 .47-.26L21 7.41a2 2 0 0 0 0-2.82L19.42 3a2 2 0 0 0-2.83 0L4.3 15.29a1.06 1.06 0 0 0-.27.47l-1 4A1 1 0 0 0 3.76 21 1 1 0 0 0 4 21zM18 4.41 19.59 6 18 7.59 16.42 6zM5.91 16.51 15 7.41 16.59 9l-9.1 9.1-2.11.52z"/></g><g transform="translate(2325.6,758.6) scale(1.19,1.15)" fill="#fff"><path d="M5 20a2 2 0 0 0 2 2h10a2 2 0 0 0 2-2V8h2V6h-4V4a2 2 0 0 0-2-2H9a2 2 0 0 0-2 2v2H3v2h2zM9 4h6v2H9zM8 8h9v12H7V8z"/><path d="M9 10h2v8H9zm4 0h2v8h-2z"/></g><g transform="translate(1460,857.25)" filter="url(#soft)">
<path d="M12.7 -12.6L35.8 -19.4L49.4 -14.9L26.7 -4Z" fill="#e6e8ea"/>
<path d="M27.5 -16.9L36.5 -19.3L48.6 -15L38.8 -10.4Z" fill="#f1cfc6" opacity=".85"/>
<path d="M12.7 -12.6L26.7 -4L26.3 4.2L14.5 -4.6L12.9 -4Z" fill="#d5d9dd"/>
<path d="M16.6 -9.2L22.6 -5.4L22.6 -2.4L16.8 -6.4Z" fill="#2a2c2f"/>
<path d="M26.7 -4L49.4 -14.9L49.4 0.4L26.3 18.2Z" fill="#f0f1f3"/>
<path d="M26.7 -4L29.2 -5.2L28.8 16.2L26.3 18.2Z" fill="#d9dde1"/>
<path d="M48.9 -10.8L51.2 -9.9L49.2 1.9L47.1 0.5Z" fill="#1d1f21"/>
<path d="M9 -2.2L14.5 -4.6L26.3 4.2L25.8 18.2L21.7 20L10.4 11.9Z" fill="#141516"/>
<path d="M10.6 -1.2L14.2 -2.8L24.6 5L24.2 16.8L21.8 17.9L11.8 10.8Z" fill="#2b2d30"/>
<path d="M11.4 0L24 16M23.8 5.6L12.4 10.4" stroke="#4a4d51" stroke-width="1" fill="none"/>
</g><g transform="translate(2272.7,846.1) scale(1.161)" fill="#fff"><path d="M4 21a1 1 0 0 0 .24 0l4-1a1 1 0 0 0 .47-.26L21 7.41a2 2 0 0 0 0-2.82L19.42 3a2 2 0 0 0-2.83 0L4.3 15.29a1.06 1.06 0 0 0-.27.47l-1 4A1 1 0 0 0 3.76 21 1 1 0 0 0 4 21zM18 4.41 19.59 6 18 7.59 16.42 6zM5.91 16.51 15 7.41 16.59 9l-9.1 9.1-2.11.52z"/></g><g transform="translate(2325.6,843.6) scale(1.19,1.15)" fill="#fff"><path d="M5 20a2 2 0 0 0 2 2h10a2 2 0 0 0 2-2V8h2V6h-4V4a2 2 0 0 0-2-2H9a2 2 0 0 0-2 2v2H3v2h2zM9 4h6v2H9zM8 8h9v12H7V8z"/><path d="M9 10h2v8H9zm4 0h2v8h-2z"/></g><g transform="translate(1460,912.3) scale(1.0000,0.9904)" filter="url(#soft)">
<rect width="60" height="52" fill="url(#gC)"/>
<path d="M10 14.7L35.4 2L55.3 5.2L31.3 18.4Z" fill="#3b3c3f"/>
<path d="M31.3 18.4L55.3 5.2L56.7 7.9L55.8 25.6L31.7 44.2Z" fill="#303133"/>
<path d="M31.5 30.5L55.9 15.2L55.8 25.6L31.7 44.2Z" fill="#2a2b2d"/>
<path d="M10 14.7L31.3 18.4L31.4 22L10.2 18.2Z" fill="#2c2d2f"/>
<path d="M10.4 17.6L30.9 21L30.9 44.2L10.2 38.9Z" fill="#e4e5e7"/>
<path d="M11.8 19.5L29.4 22.5L29.4 42.3L11.7 37.7Z" fill="#77797d"/>
<g stroke="#b9bbbf" stroke-width=".8" fill="none"><path d="M11.8 24L29.4 27.3M11.8 28.5L29.4 32M11.8 33L29.4 36.8M15.5 20.2V38.7M19.5 20.9V39.7M23.5 21.6V40.7M27 22.2V41.6"/></g>
<circle cx="20.4" cy="31" r="2.1" fill="#eef0f6"/>
<g fill="#4a74c9"><rect x="24" y="12" width=".9" height=".9"/><rect x="28" y="12" width=".9" height=".9"/><rect x="31" y="11" width=".9" height=".9"/></g>
<rect x="51" y="44" width="3.4" height="1.8" fill="#b5bfdf"/><rect x="41.5" y="48.8" width="3" height="1.2" fill="#f4cf9a"/><rect x="17" y="49.8" width="3.4" height="1.2" fill="#f4d7a8"/><rect x="2" y="28.8" width="2" height="1.2" fill="#f4d7a8"/>
</g><g transform="translate(2272.7,927.1) scale(1.161)" fill="#fff"><path d="M4 21a1 1 0 0 0 .24 0l4-1a1 1 0 0 0 .47-.26L21 7.41a2 2 0 0 0 0-2.82L19.42 3a2 2 0 0 0-2.83 0L4.3 15.29a1.06 1.06 0 0 0-.27.47l-1 4A1 1 0 0 0 3.76 21 1 1 0 0 0 4 21zM18 4.41 19.59 6 18 7.59 16.42 6zM5.91 16.51 15 7.41 16.59 9l-9.1 9.1-2.11.52z"/></g><g transform="translate(2325.6,924.6) scale(1.19,1.15)" fill="#fff"><path d="M5 20a2 2 0 0 0 2 2h10a2 2 0 0 0 2-2V8h2V6h-4V4a2 2 0 0 0-2-2H9a2 2 0 0 0-2 2v2H3v2h2zM9 4h6v2H9zM8 8h9v12H7V8z"/><path d="M9 10h2v8H9zm4 0h2v8h-2z"/></g><rect x="1460" y="994.875" width="60" height="60" fill="#fff"/><g transform="translate(1460,994.875)" filter="url(#soft)">
<path d="M13.1 10.4L44.4 9.2L50.1 16.2L34.9 19.8L28.3 16.6L12.6 17.2Z" fill="#e3e6e9"/>
<path d="M13.1 10.4L33.5 9.6L33.8 14.4L13 15.2Z" fill="#cfd4da"/>
<path d="M15.5 12h5v2h-5zM22.5 11.8h5v2h-5z" fill="#8d939b"/>
<path d="M34.9 19.6L50.1 16.2L50.1 43.8L34.9 51.2Z" fill="#dfe2e6"/>
<path d="M42 17.9L50.1 16.2L50.1 43.8L42 47.7Z" fill="#eceef0"/>
<path d="M28.3 17L34.9 19.6L34.9 51.2L28.3 53.8Z" fill="#25272a"/>
<g stroke="#aab0b7" stroke-width="1"><path d="M29.3 23.6L34.4 25M29.3 28.6L34.4 30M29.3 33.6L34.4 35M29.3 38.6L34.4 40M29.3 43.6L34.4 45M29.3 48.4L34.4 49.2"/></g>
<path d="M10.9 17.4L28.3 16.5L28.3 53.8L24.2 54.6L10.9 50.6Z" fill="#111213"/>
<g stroke="#3d4043" stroke-width="1.1" fill="none"><path d="M12.5 22L27 36M27 20L12.5 36M12.5 38L27 52M27 37L12.5 50"/></g>
<circle cx="17.6" cy="26.2" r="3.1" fill="#aeb4bb"/><circle cx="18.6" cy="44.3" r="3.1" fill="#aeb4bb"/>
<circle cx="17.6" cy="26.2" r="1.1" fill="#5b5e62"/><circle cx="18.6" cy="44.3" r="1.1" fill="#5b5e62"/>
<path d="M29.5 14.2L33.8 13.6L34.4 18.6L38 19.2L46 16.6L45.4 13.6" fill="none" stroke="#15171a" stroke-width="1.7"/>
<path d="M41.4 11.6l2.6 -.4 .8 2.6 -2.6 .5zM40 16l2.4 -.4 .6 2 -2.4 .5z" fill="#c27a1f"/>
</g><g transform="translate(2272.7,1014.1) scale(1.161)" fill="#fff"><path d="M4 21a1 1 0 0 0 .24 0l4-1a1 1 0 0 0 .47-.26L21 7.41a2 2 0 0 0 0-2.82L19.42 3a2 2 0 0 0-2.83 0L4.3 15.29a1.06 1.06 0 0 0-.27.47l-1 4A1 1 0 0 0 3.76 21 1 1 0 0 0 4 21zM18 4.41 19.59 6 18 7.59 16.42 6zM5.91 16.51 15 7.41 16.59 9l-9.1 9.1-2.11.52z"/></g><g transform="translate(2325.6,1011.6) scale(1.19,1.15)" fill="#fff"><path d="M5 20a2 2 0 0 0 2 2h10a2 2 0 0 0 2-2V8h2V6h-4V4a2 2 0 0 0-2-2H9a2 2 0 0 0-2 2v2H3v2h2zM9 4h6v2H9zM8 8h9v12H7V8z"/><path d="M9 10h2v8H9zm4 0h2v8h-2z"/></g><g transform="translate(1460,1109.875)" filter="url(#soft)">
<path d="M12.7 -12.6L35.8 -19.4L49.4 -14.9L26.7 -4Z" fill="#e6e8ea"/>
<path d="M27.5 -16.9L36.5 -19.3L48.6 -15L38.8 -10.4Z" fill="#f1cfc6" opacity=".85"/>
<path d="M12.7 -12.6L26.7 -4L26.3 4.2L14.5 -4.6L12.9 -4Z" fill="#d5d9dd"/>
<path d="M16.6 -9.2L22.6 -5.4L22.6 -2.4L16.8 -6.4Z" fill="#2a2c2f"/>
<path d="M26.7 -4L49.4 -14.9L49.4 0.4L26.3 18.2Z" fill="#f0f1f3"/>
<path d="M26.7 -4L29.2 -5.2L28.8 16.2L26.3 18.2Z" fill="#d9dde1"/>
<path d="M48.9 -10.8L51.2 -9.9L49.2 1.9L47.1 0.5Z" fill="#1d1f21"/>
<path d="M9 -2.2L14.5 -4.6L26.3 4.2L25.8 18.2L21.7 20L10.4 11.9Z" fill="#141516"/>
<path d="M10.6 -1.2L14.2 -2.8L24.6 5L24.2 16.8L21.8 17.9L11.8 10.8Z" fill="#2b2d30"/>
<path d="M11.4 0L24 16M23.8 5.6L12.4 10.4" stroke="#4a4d51" stroke-width="1" fill="none"/>
</g><g transform="translate(2272.7,1098.1) scale(1.161)" fill="#fff"><path d="M4 21a1 1 0 0 0 .24 0l4-1a1 1 0 0 0 .47-.26L21 7.41a2 2 0 0 0 0-2.82L19.42 3a2 2 0 0 0-2.83 0L4.3 15.29a1.06 1.06 0 0 0-.27.47l-1 4A1 1 0 0 0 3.76 21 1 1 0 0 0 4 21zM18 4.41 19.59 6 18 7.59 16.42 6zM5.91 16.51 15 7.41 16.59 9l-9.1 9.1-2.11.52z"/></g><g transform="translate(2325.6,1095.6) scale(1.19,1.15)" fill="#fff"><path d="M5 20a2 2 0 0 0 2 2h10a2 2 0 0 0 2-2V8h2V6h-4V4a2 2 0 0 0-2-2H9a2 2 0 0 0-2 2v2H3v2h2zM9 4h6v2H9zM8 8h9v12H7V8z"/><path d="M9 10h2v8H9zm4 0h2v8h-2z"/></g><g transform="translate(1460,1165.3) scale(1.0000,0.9712)" filter="url(#soft)">
<rect width="60" height="52" fill="url(#gC)"/>
<path d="M10 14.7L35.4 2L55.3 5.2L31.3 18.4Z" fill="#3b3c3f"/>
<path d="M31.3 18.4L55.3 5.2L56.7 7.9L55.8 25.6L31.7 44.2Z" fill="#303133"/>
<path d="M31.5 30.5L55.9 15.2L55.8 25.6L31.7 44.2Z" fill="#2a2b2d"/>
<path d="M10 14.7L31.3 18.4L31.4 22L10.2 18.2Z" fill="#2c2d2f"/>
<path d="M10.4 17.6L30.9 21L30.9 44.2L10.2 38.9Z" fill="#e4e5e7"/>
<path d="M11.8 19.5L29.4 22.5L29.4 42.3L11.7 37.7Z" fill="#77797d"/>
<g stroke="#b9bbbf" stroke-width=".8" fill="none"><path d="M11.8 24L29.4 27.3M11.8 28.5L29.4 32M11.8 33L29.4 36.8M15.5 20.2V38.7M19.5 20.9V39.7M23.5 21.6V40.7M27 22.2V41.6"/></g>
<circle cx="20.4" cy="31" r="2.1" fill="#eef0f6"/>
<g fill="#4a74c9"><rect x="24" y="12" width=".9" height=".9"/><rect x="28" y="12" width=".9" height=".9"/><rect x="31" y="11" width=".9" height=".9"/></g>
<rect x="51" y="44" width="3.4" height="1.8" fill="#b5bfdf"/><rect x="41.5" y="48.8" width="3" height="1.2" fill="#f4cf9a"/><rect x="17" y="49.8" width="3.4" height="1.2" fill="#f4d7a8"/><rect x="2" y="28.8" width="2" height="1.2" fill="#f4d7a8"/>
</g><g transform="translate(2272.7,1179.1) scale(1.161)" fill="#fff"><path d="M4 21a1 1 0 0 0 .24 0l4-1a1 1 0 0 0 .47-.26L21 7.41a2 2 0 0 0 0-2.82L19.42 3a2 2 0 0 0-2.83 0L4.3 15.29a1.06 1.06 0 0 0-.27.47l-1 4A1 1 0 0 0 3.76 21 1 1 0 0 0 4 21zM18 4.41 19.59 6 18 7.59 16.42 6zM5.91 16.51 15 7.41 16.59 9l-9.1 9.1-2.11.52z"/></g><g transform="translate(2325.6,1176.6) scale(1.19,1.15)" fill="#fff"><path d="M5 20a2 2 0 0 0 2 2h10a2 2 0 0 0 2-2V8h2V6h-4V4a2 2 0 0 0-2-2H9a2 2 0 0 0-2 2v2H3v2h2zM9 4h6v2H9zM8 8h9v12H7V8z"/><path d="M9 10h2v8H9zm4 0h2v8h-2z"/></g><g transform="translate(1460,1246.5)" filter="url(#soft)">
<path d="M13.1 10.4L44.4 9.2L50.1 16.2L34.9 19.8L28.3 16.6L12.6 17.2Z" fill="#e3e6e9"/>
<path d="M13.1 10.4L33.5 9.6L33.8 14.4L13 15.2Z" fill="#cfd4da"/>
<path d="M15.5 12h5v2h-5zM22.5 11.8h5v2h-5z" fill="#8d939b"/>
<path d="M34.9 19.6L50.1 16.2L50.1 43.8L34.9 51.2Z" fill="#dfe2e6"/>
<path d="M42 17.9L50.1 16.2L50.1 43.8L42 47.7Z" fill="#eceef0"/>
<path d="M28.3 17L34.9 19.6L34.9 51.2L28.3 53.8Z" fill="#25272a"/>
<g stroke="#aab0b7" stroke-width="1"><path d="M29.3 23.6L34.4 25M29.3 28.6L34.4 30M29.3 33.6L34.4 35M29.3 38.6L34.4 40M29.3 43.6L34.4 45M29.3 48.4L34.4 49.2"/></g>
<path d="M10.9 17.4L28.3 16.5L28.3 53.8L24.2 54.6L10.9 50.6Z" fill="#111213"/>
<g stroke="#3d4043" stroke-width="1.1" fill="none"><path d="M12.5 22L27 36M27 20L12.5 36M12.5 38L27 52M27 37L12.5 50"/></g>
<circle cx="17.6" cy="26.2" r="3.1" fill="#aeb4bb"/><circle cx="18.6" cy="44.3" r="3.1" fill="#aeb4bb"/>
<circle cx="17.6" cy="26.2" r="1.1" fill="#5b5e62"/><circle cx="18.6" cy="44.3" r="1.1" fill="#5b5e62"/>
<path d="M29.5 14.2L33.8 13.6L34.4 18.6L38 19.2L46 16.6L45.4 13.6" fill="none" stroke="#15171a" stroke-width="1.7"/>
<path d="M41.4 11.6l2.6 -.4 .8 2.6 -2.6 .5zM40 16l2.4 -.4 .6 2 -2.4 .5z" fill="#c27a1f"/>
</g><g transform="translate(2272.7,1266.1) scale(1.161)" fill="#fff"><path d="M4 21a1 1 0 0 0 .24 0l4-1a1 1 0 0 0 .47-.26L21 7.41a2 2 0 0 0 0-2.82L19.42 3a2 2 0 0 0-2.83 0L4.3 15.29a1.06 1.06 0 0 0-.27.47l-1 4A1 1 0 0 0 3.76 21 1 1 0 0 0 4 21zM18 4.41 19.59 6 18 7.59 16.42 6zM5.91 16.51 15 7.41 16.59 9l-9.1 9.1-2.11.52z"/></g><g transform="translate(2325.6,1263.6) scale(1.19,1.15)" fill="#fff"><path d="M5 20a2 2 0 0 0 2 2h10a2 2 0 0 0 2-2V8h2V6h-4V4a2 2 0 0 0-2-2H9a2 2 0 0 0-2 2v2H3v2h2zM9 4h6v2H9zM8 8h9v12H7V8z"/><path d="M9 10h2v8H9zm4 0h2v8h-2z"/></g></svg>
<span style="left:477.80px;top:1345.53px;font:400 23px/1 'Liberation Sans',sans-serif;letter-spacing:0.139px;color:#727e8c;">Showing 1 to 10 of 14 entries</span>
<div style="left:2146.3px;top:1376.2px;width:116.7px;height:48.5px;background:#f2f4f4;border:1.3px solid #dfe3e7;border-radius:7px;box-sizing:border-box;"></div>
<div style="left:2272px;top:1376.2px;width:94px;height:51px;background:#fff;border:1.3px solid #dfe3e7;border-radius:7px;box-sizing:border-box;"></div>
<div style="left:2271.8px;top:1377px;width:46.4px;height:49.6px;background:#5a8dee;border-radius:7px;"></div>
<div style="left:2374.1px;top:1376.2px;width:73.8px;height:48.5px;background:#fff;border:1.3px solid #dfe3e7;border-radius:7px;box-sizing:border-box;"></div>
<span style="left:2158.00px;top:1390.88px;font:700 22px/1 'Liberation Sans',sans-serif;letter-spacing:-0.171px;color:#8592a0;">Previous</span>
<span style="left:2194.90px;top:1390.55px;font:700 22.5px/1 'Liberation Sans',sans-serif;letter-spacing:0.000px;color:#fff;width:200px;text-align:center;">1</span>
<span style="left:2241.60px;top:1390.55px;font:400 22.5px/1 'Liberation Sans',sans-serif;letter-spacing:0.000px;color:#304156;width:200px;text-align:center;">2</span>
<span style="left:2386.00px;top:1390.88px;font:700 22px/1 'Liberation Sans',sans-serif;letter-spacing:0.314px;color:#5a8dee;">Next</span>
<svg style="left:0px;top:0px;z-index:9;pointer-events:none;" width="2560" height="1461" viewBox="0 0 2560 1461"><defs><pattern id="wm" patternUnits="userSpaceOnUse" width="434" height="201" patternTransform="translate(843.6,17.1) rotate(45)"><text x="0" y="30" font-family="Liberation Serif,serif" font-size="29" letter-spacing="3.2" fill="#fff" fill-opacity="0.46">vip.9fym.com</text></pattern></defs><rect width="2560" height="1461" fill="url(#wm)"/></svg>
</div></body></html>
